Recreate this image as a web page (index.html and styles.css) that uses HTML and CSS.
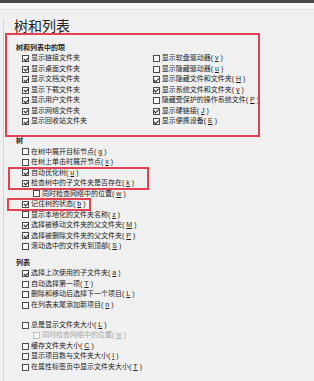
FILE: index.html
```html
<!DOCTYPE html>
<html lang="zh-CN">
<head>
    <meta charset="UTF-8">
    <meta name="viewport" content="width=device-width, initial-scale=1.0">
    <title>树和列表</title>
    <link rel="stylesheet" href="styles.css">
</head>
<body>
    <div class="topbar"></div>
    <div class="strip"></div>
    <div class="panel">
        <h1 class="page-title">树和列表</h1>

        <div class="items-box mark">
            <div class="group-title">树和列表中的项</div>
            <div class="cols">
                <div class="col">
                    <label class="opt"><input type="checkbox" checked>显示链接文件夹</label>
                    <label class="opt"><input type="checkbox" checked>显示桌面文件夹</label>
                    <label class="opt"><input type="checkbox" checked>显示文档文件夹</label>
                    <label class="opt"><input type="checkbox" checked>显示下载文件夹</label>
                    <label class="opt"><input type="checkbox" checked>显示用户文件夹</label>
                    <label class="opt"><input type="checkbox" checked>显示网络文件夹</label>
                    <label class="opt"><input type="checkbox" checked>显示回收站文件夹</label>
                </div>
                <div class="col">
                    <label class="opt"><input type="checkbox">显示软盘驱动器(<u>v</u>)</label>
                    <label class="opt"><input type="checkbox">显示隐藏驱动器(<u>u</u>)</label>
                    <label class="opt"><input type="checkbox" checked>显示隐藏文件和文件夹(<u>H</u>)</label>
                    <label class="opt"><input type="checkbox" checked>显示系统文件和文件夹(<u>y</u>)</label>
                    <label class="opt"><input type="checkbox">隐藏受保护的操作系统文件(<u>P</u>)</label>
                    <label class="opt"><input type="checkbox" checked>显示硬链接(<u>J</u>)</label>
                    <label class="opt"><input type="checkbox" checked>显示便携设备(<u>E</u>)</label>
                </div>
            </div>
        </div>

        <div class="group">
            <div class="group-title">树</div>
            <div class="opts">
                <label class="opt"><input type="checkbox">在树中展开目标节点(<u>g</u>)</label>
                <label class="opt"><input type="checkbox">在树上单击时展开节点(<u>x</u>)</label>
                <div class="mark mark-tree">
                    <label class="opt"><input type="checkbox" checked>自动优化树(<u>u</u>)</label>
                    <label class="opt"><input type="checkbox" checked>检查树中的子文件夹是否存在(<u>k</u>)</label>
                </div>
                <label class="opt sub"><input type="checkbox">同时检查网络中的位置(<u>w</u>)</label>
                <label class="opt mark mark-state"><input type="checkbox" checked>记住树的状态(<u>b</u>)</label>
                <label class="opt"><input type="checkbox">显示本地化的文件夹名称(<u>z</u>)</label>
                <label class="opt"><input type="checkbox" checked>选择被移动文件夹的父文件夹(<u>M</u>)</label>
                <label class="opt"><input type="checkbox" checked>选择被删除文件夹的父文件夹(<u>P</u>)</label>
                <label class="opt"><input type="checkbox">滚动选中的文件夹到顶部(<u>S</u>)</label>
            </div>
        </div>

        <div class="group group-list">
            <div class="group-title">列表</div>
            <div class="opts">
                <label class="opt"><input type="checkbox" checked>选择上次使用的子文件夹(<u>a</u>)</label>
                <label class="opt"><input type="checkbox">自动选择第一项(<u>T</u>)</label>
                <label class="opt"><input type="checkbox">删除和移动后选择下一个项目(<u>L</u>)</label>
                <label class="opt"><input type="checkbox">在列表末尾添加新项目(<u>n</u>)</label>
                <label class="opt gap"><input type="checkbox">总是显示文件夹大小(<u>L</u>)</label>
                <label class="opt sub disabled"><input type="checkbox" disabled>同时检查网络中的位置(<u>w</u>)</label>
                <label class="opt"><input type="checkbox">缓存文件夹大小(<u>C</u>)</label>
                <label class="opt"><input type="checkbox">显示项目数与文件夹大小(<u>I</u>)</label>
                <label class="opt"><input type="checkbox">在属性标签页中显示文件夹大小(<u>T</u>)</label>
            </div>
        </div>
    </div>
</body>
</html>
```
FILE: styles.css
```css
body { margin: 0; background-color: #f0f0f0; color: #1c1c1c; font-family: "Liberation Sans", "Noto Sans CJK SC", sans-serif; }
.topbar { height: 3px; background-color: #484848; }
.strip { height: 6px; background-color: #f5f5f5; border-bottom: 1px solid #e4e4e4; }
.panel { margin-left: 3px; border-left: 1px solid #d4d4d4; min-height: 371px; }
.page-title { margin: 8px 0 0 10px; font-size: 14px; line-height: 16px; font-weight: normal; color: #222; }

/* red annotation frames */
.mark { outline: 2px solid #e3414f; outline-offset: -1px; box-sizing: border-box; }

.items-box { margin-left: 2px; width: 253px; padding: 8.75px 0 9.25px 10px; }
.cols { display: flex; padding-left: 6px; }
.cols .col:first-child { width: 136px; }

.group-title { padding-left: 12px; font-size: 7px; line-height: 10.5px; font-weight: bold; }
.items-box .group-title { padding-left: 0; }
.group-list .group-title { margin-top: 6.25px; }
.opts { padding-left: 18px; }

.opt { display: flex; align-items: center; gap: 2px; height: 10.5px; font-size: 7px; line-height: 10.5px; white-space: nowrap; }
.opt u { text-underline-offset: 1px; }
.opt.sub { padding-left: 11px; }
.opt.gap { margin-top: 9.5px; }
.opt.disabled { color: #a6a6a6; }

.mark-tree { margin-left: -13px; padding-left: 13px; width: 139px; }
.mark-state { margin-left: -14px; padding-left: 14px; width: 82px; }

input[type="checkbox"] { appearance: none; flex: none; position: relative; width: 7px; height: 7px; margin: 0; border: 1px solid #4a4a4a; background-color: #fdfdfd; box-sizing: border-box; }
input[type="checkbox"]:checked::after { content: ""; position: absolute; left: 1.5px; top: -0.5px; width: 1.5px; height: 3.5px; border: solid #222; border-width: 0 1px 1px 0; transform: rotate(45deg); }
input[type="checkbox"]:disabled { border-color: #c2c2c2; background-color: #f4f4f4; }
```
